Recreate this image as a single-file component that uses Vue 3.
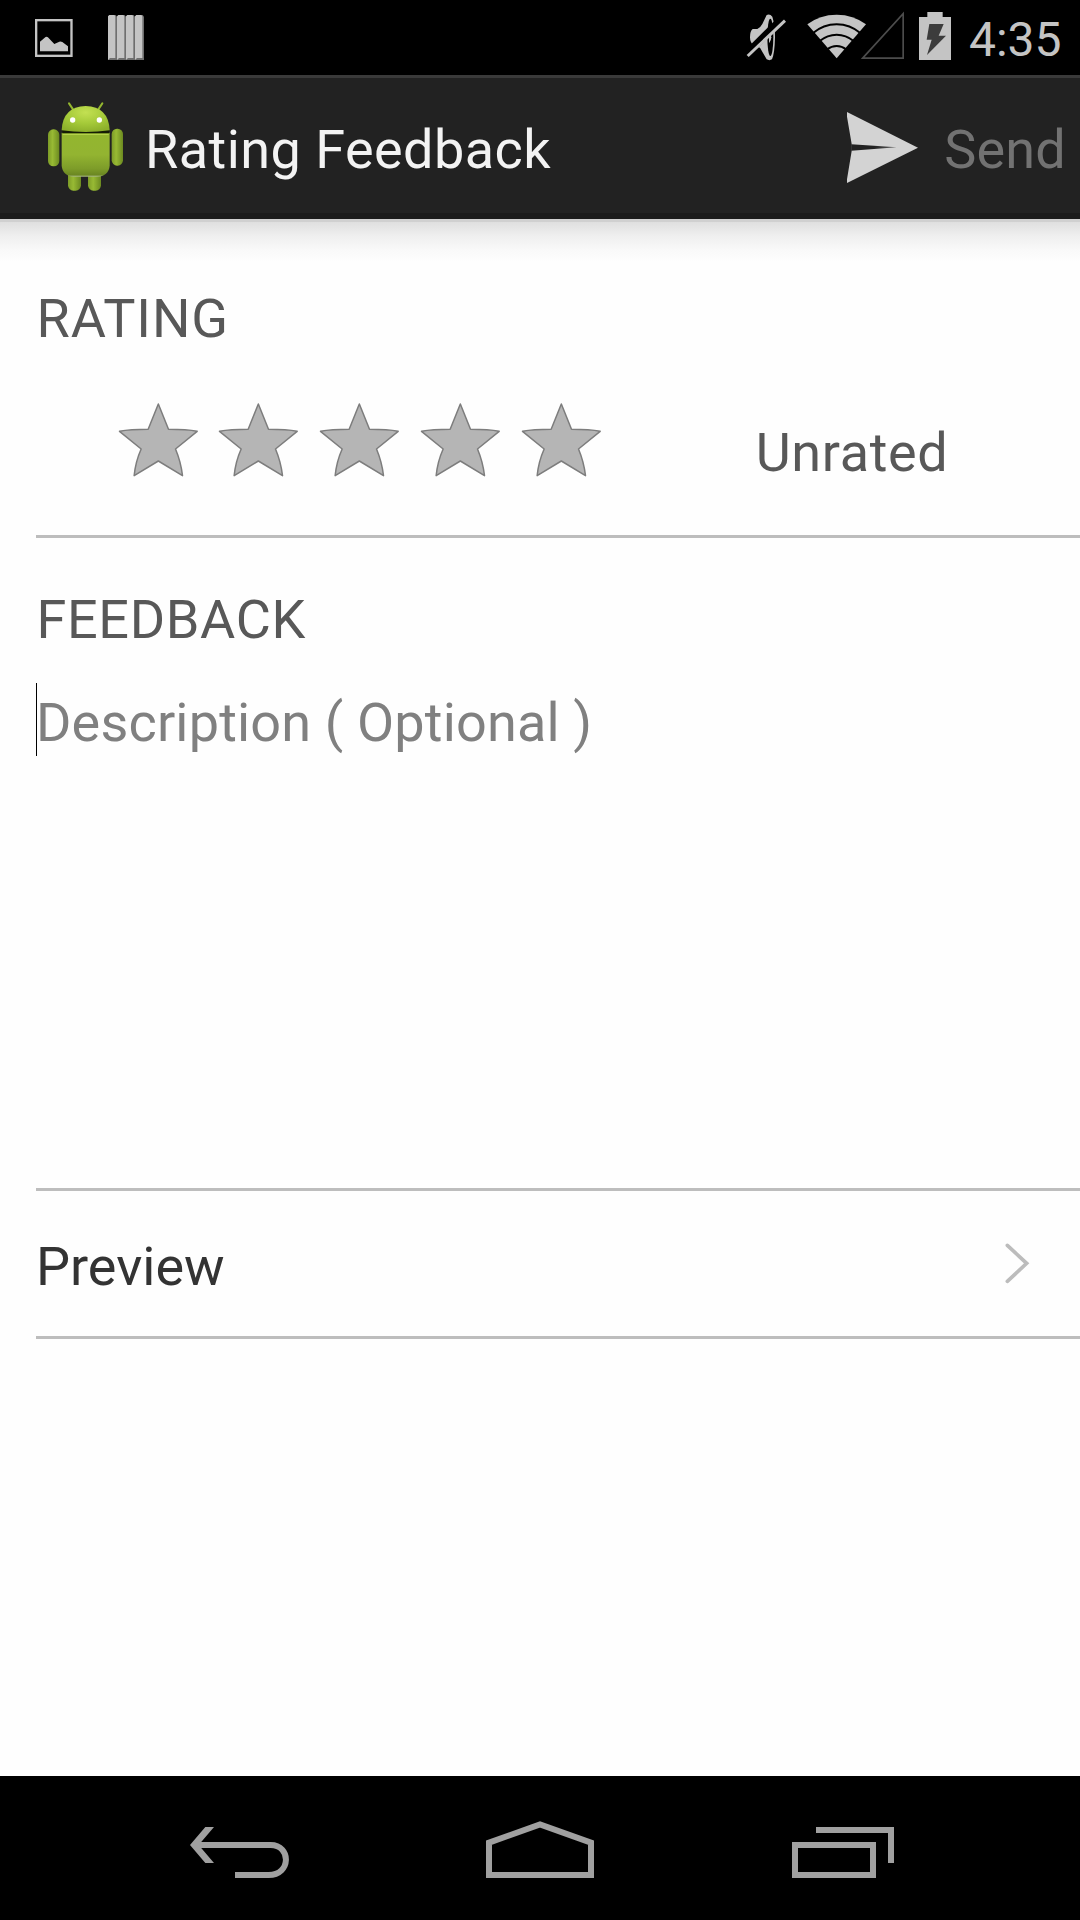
<script setup>
import { ref } from 'vue'

const maxStars = 5
const ratingLabel = ref('Unrated')
const placeholder = 'Description ( Optional )'
</script>

<template>
  <div class="screen">
    <header class="status-bar">
      <svg class="status-picture" viewBox="105 57 113 114">
        <rect x="108.5" y="60.500" width="106" height="107" fill="none" stroke="#c4c4c4" stroke-width="7" />
        <path d="M120 154V125L134 113Q141 107 148 116L163 132L178 125Q182 123 187 126L204 139V154Z" fill="#c4c4c4" />
      </svg>
      <svg class="status-bars" viewBox="324 45 108 136">
        <g v-for="n in 4" :key="n" :transform="`translate(${(n - 1) * 27} 0)`">
          <path d="M324 50L328 45H347L351 50V181H324Z" fill="#6f6f6f" />
          <path d="M324 49L328 45H343L346 49V174H330L324 180Z" fill="#c4c4c4" />
        </g>
      </svg>
      <span class="spacer"></span>
      <svg class="status-mute" viewBox="72 30 135 159">
        <path d="M140 45Q150 41 157 50Q165 75 165 112Q164 160 156 178Q148 183 140 178L120 143L103 138Q90 130 90 112Q90 92 98 87H112Q122 82 127 72Z" fill="#c4c4c4" />
        <ellipse cx="151" cy="112" rx="9" ry="56" fill="#000" />
        <path d="M147 96Q154 103 154 112Q154 122 147 130Z" fill="#c4c4c4" />
        <path d="M78 163L190 52" stroke="#000" stroke-width="22" />
        <path d="M83 168L195 62" stroke="#c4c4c4" stroke-width="9" />
      </svg>
      <svg class="status-wifi" viewBox="261 30 180 159">
        <path d="M350 175L262 73Q299 44 350 44Q400 44 438 73Z" fill="#c4c4c4" />
        <g fill="none" stroke="#000" stroke-width="6">
          <path d="M278 100Q310 73 350 73Q390 73 422 100" />
          <path d="M299 123Q322 104 350 104Q378 104 401 123" />
          <path d="M322 148Q334 138 350 138Q366 138 378 148" />
        </g>
      </svg>
      <svg class="status-signal" viewBox="420 30 138 159">
        <path d="M428 174.500L549.500 41V174.500Z" fill="none" stroke="#4c4c4c" stroke-width="5" />
      </svg>
      <svg class="status-battery" viewBox="594 30 102 159">
        <path d="M597 51H622V36H668V51H693V180H597Z" fill="#c4c4c4" />
        <path d="M628 72H671L656 107H678L621 165L635 119H620Z" fill="#3c3c3c" />
      </svg>
      <span class="clock">4:35</span>
    </header>

    <div class="action-bar">
      <svg class="robot" viewBox="120 285 270 300">
        <defs>
          <linearGradient id="body" x1="0" y1="0" x2="0" y2="1">
            <stop offset="0" stop-color="#93b62f" />
            <stop offset=".5" stop-color="#93b431" />
            <stop offset=".82" stop-color="#7d9c29" />
            <stop offset=".96" stop-color="#6b8722" />
            <stop offset="1" stop-color="#a9b983" />
          </linearGradient>
          <linearGradient id="limb" x1="0" y1="0" x2="1" y2="0">
            <stop offset="0" stop-color="#7c9b27" />
            <stop offset=".4" stop-color="#98ba34" />
            <stop offset="1" stop-color="#6c8a20" />
          </linearGradient>
          <radialGradient id="head" cx=".5" cy=".25" r=".75">
            <stop offset="0" stop-color="#c3e052" />
            <stop offset=".55" stop-color="#a5ca39" />
            <stop offset="1" stop-color="#8db02b" />
          </radialGradient>
        </defs>
        <path d="M207 310L219 328M307 310L295 328" stroke="#93b62f" stroke-width="6" stroke-linecap="round" />
        <rect x="204" y="505" width="39" height="67" rx="16" fill="url(#limb)" />
        <rect x="264" y="505" width="39" height="67" rx="16" fill="url(#limb)" />
        <rect x="144" y="388" width="34" height="111" rx="16" fill="url(#limb)" />
        <rect x="335" y="386" width="34" height="111" rx="16" fill="url(#limb)" />
        <path d="M185 398H329V497Q326 529 290 530H224Q188 529 185 497Z" fill="url(#body)" />
        <path d="M188 403H326" stroke="#b4d24a" stroke-width="4" />
        <path d="M187 391H327V400H187Z" fill="#151c05" />
        <path d="M185 391Q188 320 257 318Q326 320 329 391Q257 401 185 391Z" fill="url(#head)" />
        <circle cx="218" cy="360" r="8" fill="#fff" />
        <circle cx="298" cy="360" r="8" fill="#fff" />
      </svg>
      <h1 class="title">Rating Feedback</h1>
      <span class="spacer"></span>
      <button class="send" disabled>
        <svg class="send-icon" viewBox="81 126 213 213">
          <defs>
            <linearGradient id="fold" x1="0" y1="0" x2="1" y2="0">
              <stop offset="0" stop-color="#222" />
              <stop offset=".5" stop-color="#222" />
              <stop offset="1" stop-color="#666" />
            </linearGradient>
          </defs>
          <path d="M81 126L294 233L81 339V328L95 243V222L81 140Z" fill="#d3d3d3" />
          <path d="M94 223L230 231.500L94 242Z" fill="url(#fold)" />
        </svg>
        <span>Send</span>
      </button>
    </div>

    <main class="content">
      <section class="rating">
        <h2 class="heading rating-heading">RATING</h2>
        <div class="rating-row">
          <div class="stars">
            <svg v-for="n in maxStars" :key="n" class="star" viewBox="263.5 390 302.4 240">
              <path d="M414.500 402L445 478Q500 478 531 484L466 537Q482 575 487 617L414.500 573L342 617Q346 575 363 537L298 484Q330 478 384 478Z" fill="#b5b5b5" stroke="#7d7d7d" stroke-width="4.500" stroke-linejoin="round" />
            </svg>
          </div>
          <span class="rating-label">{{ ratingLabel }}</span>
        </div>
      </section>

      <section class="feedback">
        <h2 class="heading">FEEDBACK</h2>
        <div class="description"><i class="caret"></i><span class="hint">{{ placeholder }}</span></div>
      </section>

      <section class="preview">
        <span class="preview-label">Preview</span>
        <svg class="chevron" viewBox="132 215 80 130">
          <path d="M142 225L200 279L142 333" fill="none" stroke="#bcbcbc" stroke-width="11" stroke-linecap="round" />
        </svg>
      </section>
    </main>

    <nav class="nav-bar">
      <svg class="nav-back" viewBox="90 180 297 180">
        <path d="M110 255H332C394 255 394 345 326 345H225" fill="none" stroke="#a0a0a0" stroke-width="18" />
        <path d="M90 255L136 201H162L116 255L162 309H136Z" fill="#a0a0a0" />
      </svg>
      <svg class="nav-home" viewBox="978 180 324 180">
        <path d="M987 345V248L1140 193L1293 248V345Z" fill="none" stroke="#a0a0a0" stroke-width="18" />
      </svg>
      <svg class="nav-recents" viewBox="96 180 306 180">
        <path d="M105 255H339V345H105ZM168 210H393V309" fill="none" stroke="#a0a0a0" stroke-width="18" />
      </svg>
    </nav>
  </div>
</template>

<style>
body {
  margin: 0;
}
</style>

<style scoped>
.screen {
  width: 1080px;
  height: 1920px;
  display: flex;
  flex-direction: column;
  overflow: hidden;
  background: #fefefe;
  font-family: Roboto, "Liberation Sans", sans-serif;
  font-size: 54px;
  line-height: 72px;
}
svg {
  display: block;
  flex: none;
}
.spacer {
  flex: 1;
}
.status-bar {
  height: 75px;
  flex: none;
  box-sizing: border-box;
  display: flex;
  align-items: flex-start;
  padding: 10px 18px 0 35px;
  background: #000;
}
.status-picture {
  width: 37.667px;
  height: 38px;
  margin-top: 9px;
}
.status-bars {
  width: 36px;
  height: 45.333px;
  margin: 5px 0 0 35.333px;
}
.status-mute {
  width: 45px;
  height: 53px;
}
.status-wifi {
  width: 60px;
  height: 53px;
  margin-left: 18px;
}
.status-signal {
  width: 46px;
  height: 53px;
  margin-left: -7px;
}
.status-battery {
  width: 34px;
  height: 53px;
  margin-left: 12px;
}
.clock {
  width: 93px;
  margin-left: 17px;
  font-size: 48px;
  line-height: 59px;
  color: #c4c4c4;
  white-space: nowrap;
}
.action-bar {
  height: 144px;
  flex: none;
  box-sizing: border-box;
  display: flex;
  align-items: flex-start;
  padding-left: 40px;
  padding-right: 14px;
  border-top: 3px solid #3a3a3a;
  border-bottom: 6px solid #1b1b1b;
  background: #222;
}
.robot {
  width: 90px;
  height: 100px;
  margin-top: 17px;
}
.title {
  margin: 36px 0 0 15px;
  font-size: 54px;
  font-weight: 400;
  letter-spacing: 0.45px;
  color: #f3f3f3;
  white-space: nowrap;
}
.send {
  display: flex;
  align-items: flex-start;
  padding: 0;
  margin: 34px 0 0;
  border: 0;
  background: none;
  font: inherit;
  color: #727272;
}
.send-icon {
  width: 71px;
  height: 71px;
  margin-right: 26px;
}
.send span {
  margin-top: 2px;
  letter-spacing: 0.2px;
}
.content {
  flex: 1;
  min-height: 0;
  padding: 64px 0 0 36px;
  background: linear-gradient(#d0d0d0 0 3px, #dfdfdf 3px, #efefef 17px, #f9f9f9 31px, #fefefe 43px);
}
.heading {
  margin: 0 0 0 0.5px;
  font-size: 54px;
  font-weight: 400;
  letter-spacing: 0.65px;
  color: #585858;
}
.rating-heading {
  letter-spacing: 0.85px;
}
.rating {
  height: 252px;
  border-bottom: 3px solid #bdbdbd;
}
.rating-row {
  display: flex;
  align-items: flex-start;
  padding: 45px 0 0 71.700px;
}
.stars {
  display: flex;
}
.star {
  width: 100.800px;
  height: 80px;
}
.rating-label {
  margin: 17px 0 0 144px;
  letter-spacing: 0.65px;
  color: #585858;
}
.feedback {
  height: 604px;
  padding-top: 46px;
  border-bottom: 3px solid #bdbdbd;
}
.description {
  display: flex;
  margin-top: 27px;
}
.caret {
  width: 1px;
  height: 73px;
  background: #000;
}
.hint {
  margin: 4px 0 0 -1px;
  letter-spacing: 0.17px;
  color: #808080;
  white-space: pre;
}
.preview {
  display: flex;
  align-items: flex-start;
  justify-content: space-between;
  height: 105px;
  padding: 40px 49px 0 0;
  border-bottom: 3px solid #bdbdbd;
}
.preview-label {
  color: #333;
}
.chevron {
  width: 26.667px;
  height: 43.333px;
  margin-top: 10.667px;
}
.nav-bar {
  height: 144px;
  flex: none;
  box-sizing: border-box;
  display: flex;
  padding: 44px 186px 0 190px;
  background: #000;
}
.nav-back {
  width: 99px;
  height: 60px;
}
.nav-home {
  width: 108px;
  height: 60px;
  margin: 0 198px 0 197px;
}
.nav-recents {
  width: 102px;
  height: 60px;
}
</style>
